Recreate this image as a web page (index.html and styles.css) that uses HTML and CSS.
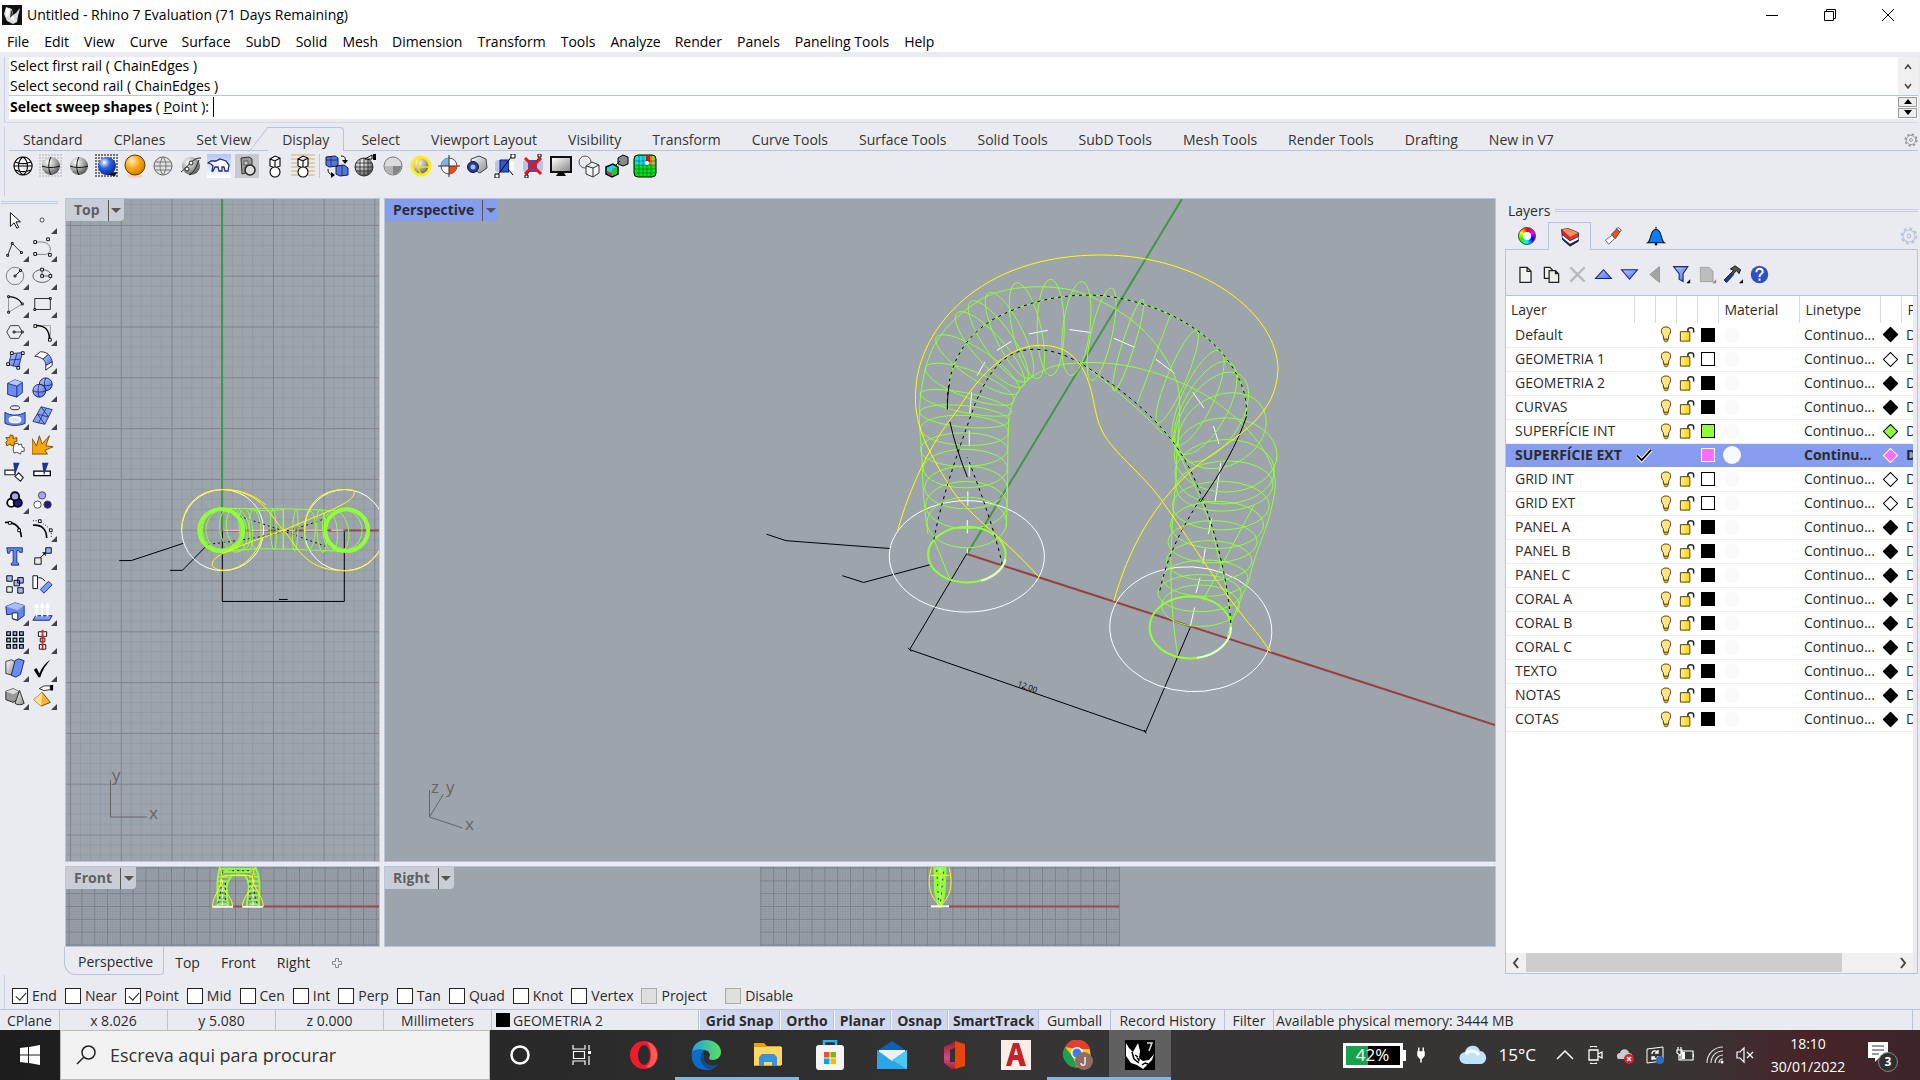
FILE: index.html
```html
<!DOCTYPE html>
<html lang="en">
<head>
<meta charset="utf-8">
<title>Untitled - Rhino 7 Evaluation (71 Days Remaining)</title>
<link rel="stylesheet" href="styles.css">
</head>
<body>
<svg class="defs" aria-hidden="true">
  <defs>
    <radialGradient id="gGrey" cx=".35" cy=".3" r=".8"><stop offset="0" stop-color="#fff"/><stop offset=".5" stop-color="#aaa"/><stop offset="1" stop-color="#444"/></radialGradient>
    <radialGradient id="gBlueBall" cx=".35" cy=".3" r=".8"><stop offset="0" stop-color="#fff"/><stop offset=".4" stop-color="#2c64e8"/><stop offset="1" stop-color="#041b80"/></radialGradient>
    <radialGradient id="gOrange" cx=".35" cy=".3" r=".8"><stop offset="0" stop-color="#ffe9b8"/><stop offset=".5" stop-color="#f9a50c"/><stop offset="1" stop-color="#c97800"/></radialGradient>
    <linearGradient id="gBlue" x2="1" y2="1"><stop offset="0" stop-color="#b9c9ff"/><stop offset="1" stop-color="#4d6fe8"/></linearGradient>
    <linearGradient id="gSky" y2="1" x2="0"><stop offset="0" stop-color="#b5c4f8"/><stop offset="1" stop-color="#fff"/></linearGradient>
    <linearGradient id="gMetal" x2="1" y2="1"><stop offset="0" stop-color="#fff"/><stop offset="1" stop-color="#8a8a8a"/></linearGradient>
    <linearGradient id="gGold" x2="1" y2="0"><stop offset="0" stop-color="#fff08a"/><stop offset="1" stop-color="#ffd60a"/></linearGradient>
    <linearGradient id="gEdge" x2="1" y2="0"><stop offset="0" stop-color="#1fa2e6"/><stop offset="1" stop-color="#5fe05a"/></linearGradient>
    <linearGradient id="gOff" y2="1" x2="0"><stop offset="0" stop-color="#a31818"/><stop offset=".6" stop-color="#d04a8a"/><stop offset="1" stop-color="#c41230"/></linearGradient>
    <pattern id="dots" width="3" height="3" patternUnits="userSpaceOnUse"><rect width="2" height="2" fill="#cfcfd2"/></pattern>
    <pattern id="dotsDark" width="3" height="3" patternUnits="userSpaceOnUse"><rect width="2" height="2" fill="#777"/></pattern>
    <pattern id="hatch" width="4" height="4" patternUnits="userSpaceOnUse"><rect width="4" height="2" fill="#dccfae"/></pattern>
    <pattern id="gridTop" x="222.2" y="529.7" width="50.7" height="50.8" patternUnits="userSpaceOnUse">
      <path d="M10.5 0V51M20.5 0V51M30.5 0V51M40.5 0V51M0 10.5H51M0 20.5H51M0 30.5H51M0 40.5H51" stroke="#929aa3" fill="none"/><path d="M.5 0V51M0 .5H51" stroke="#7f838e" fill="none"/></pattern>
    <pattern id="gridSmall" x="222.2" y="906" width="12.8" height="12.8" patternUnits="userSpaceOnUse">
      <path d="M3 0V13M5.6 0V13M8.2 0V13M10.8 0V13M0 3H13M0 5.6H13M0 8.2H13M0 10.8H13" stroke="#8c939d" stroke-width=".8" fill="none"/><path d="M.5 0V13M0 .5H13" stroke="#7a7e89" fill="none"/></pattern>
    <pattern id="gridRight" x="760.4" y="906" width="12.8" height="12.8" patternUnits="userSpaceOnUse">
      <path d="M3 0V13M5.6 0V13M8.2 0V13M10.8 0V13M0 3H13M0 5.6H13M0 8.2H13M0 10.8H13" stroke="#8c939d" stroke-width=".8" fill="none"/><path d="M.5 0V13M0 .5H13" stroke="#7a7e89" fill="none"/></pattern>
  </defs>

  <!-- display toolbar -->
  <symbol id="wire" viewBox="0 0 24 24"><path d="M12 3a9 9 0 1 0 .1 0M12 3c-6 4-6 14 0 18M12 3c6 4 6 14 0 18M4 8c5 2 11 2 16 0M4 16c5 2 11 2 16 0M3 12h18" fill="#fff" fill-opacity=".4" stroke="#000" stroke-width="1.1"/></symbol>
  <symbol id="shaded" viewBox="0 0 24 24"><path fill="url(#dots)" d="M0 0h24v24H0z"/><circle cx="12" cy="12" r="9" fill="url(#gGrey)"/><path d="M12 3c-3 5-3 13 0 18M3 12c5 2 13 2 18 0" stroke="#111" fill="none"/></symbol>
  <symbol id="shaded2" viewBox="0 0 24 24"><circle cx="12" cy="12" r="9" fill="url(#gGrey)"/><path d="M12 3c-3 5-3 13 0 18M3 12c5 2 13 2 18 0" stroke="#111" fill="none"/></symbol>
  <symbol id="rendered" viewBox="0 0 24 24"><path fill="url(#dotsDark)" d="M0 0h24v24H0z"/><path d="M8 20l12 2 2-4z" fill="#000"/><circle cx="12" cy="12" r="9" fill="url(#gBlueBall)"/></symbol>
  <symbol id="orange" viewBox="0 0 24 24"><ellipse cx="12" cy="22" rx="8" ry="2" fill="#f3cfc4"/><circle cx="12" cy="11" r="10" fill="url(#gOrange)" stroke="#5b3a00"/></symbol>
  <symbol id="ghost" viewBox="0 0 24 24"><circle cx="12" cy="12" r="9" fill="#dfe1e4" stroke="#666"/><path d="M12 3c-4 5-4 13 0 18M12 3c4 5 4 13 0 18M3 12h18M4 8h16M4 16h16" stroke="#777" fill="none"/></symbol>
  <symbol id="xray" viewBox="0 0 24 24"><circle cx="12" cy="12" r="9" fill="url(#gGrey)"/><path d="M2 18C8 14 14 3 22 4M10 21c6-3 7-8 10-15" stroke="#222" fill="none"/><circle cx="12" cy="9" r="2" fill="#fff" stroke="#222"/><circle cx="8" cy="15" r="2" fill="#fff" stroke="#222"/></symbol>
  <symbol id="arctic" viewBox="0 0 24 24"><path fill="url(#gSky)" d="M0 0h24v24H0z"/><path d="M1 9l3-2 5 0 4-2 6 2 3 4-1 6h-3l-1-4-2 0 0 4h-3l-1-4-3 0-2 4H5l1-5-2-2z" fill="#fff" stroke="#1e2a80" stroke-width="1.3"/></symbol>
  <symbol id="tech" viewBox="0 0 24 24"><path fill="#c9cacd" d="M0 0h24v24H0z"/><path d="M6 4l8-1 3 2v12l-10 3z" fill="#999" stroke="#333"/><path d="M9 7h4v4H9z" fill="#ccc" stroke="#555"/><circle cx="15" cy="16" r="5" fill="#ddd" stroke="#222" stroke-width="1.5"/></symbol>
  <symbol id="artistic" viewBox="0 0 24 24"><path d="M7 5l5-3 5 2v8l-5 2-5-2zM7 5l5 2 5-3M12 7v6" fill="#fff" stroke="#000" stroke-width="1.1"/><circle cx="12" cy="18" r="5" fill="#fff" stroke="#000" stroke-width="1.1"/></symbol>
  <symbol id="pen" viewBox="0 0 24 24"><path fill="url(#hatch)" d="M0 0h24v24H0z"/><path d="M7 5l5-3 5 2v8l-5 2-5-2zM7 5l5 2 5-3M12 7v6" fill="#fff" stroke="#000" stroke-width="1.1"/><circle cx="12" cy="18" r="5" fill="#fff" stroke="#000" stroke-width="1.1"/></symbol>
  <symbol id="toggle" viewBox="0 0 24 24"><path d="M1 3l9-1 3 2v8l-9 1-3-2zM11 12l8-1 4 3v7l-8 1-4-2z" fill="#5577d8" stroke="#101a50"/><path d="M1 6h12M6 2v10M17 11v10" stroke="#101a50" stroke-width=".7"/><path d="M16 2c4 0 5 2 4 7M3 15c0 4 2 6 6 6" stroke="#000" fill="none"/><path d="M17 6l3 4 3-4zM6 18l4 3-4 3z" fill="#000"/></symbol>
  <symbol id="mesh" viewBox="0 0 24 24"><circle cx="11" cy="13" r="9" fill="url(#gGrey)" stroke="#333"/><path d="M7 5v16M11 4v18M15 5v16M3 9h16M2 13h18M3 17h16" stroke="#222" stroke-width=".8"/><path d="M12 5l7-4v4z" fill="#fff" stroke="#000"/><path d="M20 0h3v6h-3z"/></symbol>
  <symbol id="flat" viewBox="0 0 24 24"><circle cx="12" cy="12" r="9" fill="#dcdcde" stroke="#777"/><path d="M3.500 12h8.500v8.500A9 9 0 0 1 3.500 12z" fill="#b5b5b8"/><path d="M12 12h8.500a9 9 0 0 1-8.500 8.500z" fill="#868689"/></symbol>
  <symbol id="glow" viewBox="0 0 24 24"><circle cx="12" cy="12" r="9" fill="url(#gGrey)" stroke="#ffec1a" stroke-width="3"/><path d="M12 4c-4 5-4 11 0 16M4 13h16" stroke="#f4dd20" fill="none" stroke-width="1.5"/></symbol>
  <symbol id="quad" viewBox="0 0 24 24"><circle cx="12" cy="12" r="8" fill="#f4f6fa" stroke="#555"/><path d="M12 4a8 8 0 0 0-8 8h8z" fill="#82aef0"/><path d="M12 20a8 8 0 0 0 8-8h-8z" fill="#f04a18"/><path d="M12 1v22M1 12h22" stroke="#333"/></symbol>
  <symbol id="camera" viewBox="0 0 24 24"><path d="M6 5l8-3 7 3 1 9-7 5-8-4z" fill="url(#gMetal)" stroke="#444"/><circle cx="8" cy="13" r="5.500" fill="#243f96" stroke="#0b1640"/><circle cx="8" cy="13" r="2.500" fill="#a9bdf2"/></symbol>
  <symbol id="clip" viewBox="0 0 24 24"><rect x="2" y="6" width="8" height="12" rx="3" fill="#b9c4e6"/><path d="M7 6h9v12H7z" fill="#2f57cf" stroke="#0a1a66"/><path d="M16 6l5 2v9l-5 1z" fill="#fff" opacity=".8"/><path d="M4 22L19 2M15 15l5 6" stroke="#000"/><path d="M2 20h4v4H2zM18 0h4v4h-4z" fill="#fff" stroke="#000"/></symbol>
  <symbol id="clipx" viewBox="0 0 24 24"><rect x="2" y="6" width="20" height="12" rx="3" fill="#b9c4e6"/><path d="M7 6h9v12H7z" fill="#2f57cf"/><path d="M5 22L19 2" stroke="#000"/><path d="M17 0h3v3h-3zM4 21h3v3H4z" fill="#fff" stroke="#000"/><path d="M4 4l16 16M20 4L4 20" stroke="#f01414" stroke-width="3"/></symbol>
  <symbol id="monitor" viewBox="0 0 24 24"><path d="M1 2h22v17H1z" fill="#111"/><path d="M3 4h18v13H3z" fill="url(#gMetal)"/><path d="M9 19h6l2 3H7z"/></symbol>
  <symbol id="boxes" viewBox="0 0 24 24"><circle cx="8" cy="8" r="6" fill="none" stroke="#555"/><path d="M9 12l6-4 7 3v8l-6 4-7-3zM9 12l7 2 6-3M16 14v9" fill="#f5f6f8" stroke="#333"/></symbol>
  <symbol id="rgb" viewBox="0 0 24 24"><path d="M13 4l5-3 5 2v7l-5 2-5-2z" fill="#8a8a8a" stroke="#000"/><path d="M9 13l6-6" stroke="#000"/><path d="M1 13l7-3 5 3v7l-6 3-6-3z" fill="#18d8e8" stroke="#000" stroke-width="1.500"/><path d="M2 17l5 2v3l-5-2z" fill="#e22"/><path d="M7 15l5-2v7l-5 2z" fill="#19c832"/></symbol>
  <symbol id="heat" viewBox="0 0 24 24"><rect x="1" y="1" width="22" height="22" rx="4" fill="#0be00b" stroke="#000"/><path d="M4 2h9v9H2V4z" fill="#10e0e8"/><path d="M13 2h4v6h-4z" fill="#f01010"/><path d="M17 2h4l1 9h-5z" fill="#f0a818"/><path d="M6 2v20M10 2v20M14 2v20M18 2v20M2 7h20M2 11h20M2 15h20M2 19h20" stroke="#046" stroke-width=".5"/><circle cx="14" cy="9" r="2" fill="#fff"/></symbol>

  <!-- modelling toolbar -->
  <symbol id="select" viewBox="0 0 24 24"><path d="M7 4v15l4-4 3 6 2-1-3-6h5z" fill="#fff" stroke="#000"/></symbol>
  <symbol id="point" viewBox="0 0 24 24"><circle cx="11" cy="12" r="2.2" fill="#fff" stroke="#333"/></symbol>
  <symbol id="poly" viewBox="0 0 24 24"><path d="M4 20L9 7l10 10" stroke="#222" fill="none"/><path d="M3 19h2v2H3zM8 6h2v2H8zM18 16h2v2h-2z" fill="#fff" stroke="#000"/></symbol>
  <symbol id="curve" viewBox="0 0 24 24"><path d="M3 6c20-4 20 12 12 13H3" stroke="#777" fill="none"/><path d="M2 4h3v3H2zM16 1h3v3h-3zM2 17h3v3H2zM18 18h3v3h-3z" fill="#fff" stroke="#000"/></symbol>
  <symbol id="circle" viewBox="0 0 24 24"><circle cx="12" cy="12" r="9.500" fill="none" stroke="#777"/><path d="M12 12l6-6" stroke="#000"/><path d="M11 11h2v2h-2zM17 5h2v2h-2z" fill="#fff" stroke="#000"/></symbol>
  <symbol id="ellipse" viewBox="0 0 24 24"><ellipse cx="11" cy="12" rx="10" ry="7" fill="none" stroke="#555"/><path d="M11 5v7h9" stroke="#555" fill="none"/><path d="M9.500 3.500h3v3h-3zM9.500 10.500h3v3h-3zM18.500 10.500h3v3h-3z" fill="#fff" stroke="#000"/></symbol>
  <symbol id="arc" viewBox="0 0 24 24"><path d="M5 4v17l15-9" stroke="#888" fill="none"/><path d="M5 4c7 0 12 3 15 8" stroke="#000" fill="none" stroke-width="1.4"/><path d="M4 3h2v2H4zM4 20h2v2H4zM19 11h2v2h-2z" fill="#fff" stroke="#000"/></symbol>
  <symbol id="rect" viewBox="0 0 24 24"><path d="M3 6h17v12H3z" fill="none" stroke="#222"/><path d="M2 17h2v2H2zM19 5h2v2h-2z" fill="#fff" stroke="#000"/></symbol>
  <symbol id="polygon" viewBox="0 0 24 24"><path d="M7 5h9l4 7-4 7H7l-4-7zM12 12h8" fill="none" stroke="#333"/><path d="M10 11h2v2h-2zM19 11h2v2h-2z" fill="#fff" stroke="#000"/></symbol>
  <symbol id="fillet" viewBox="0 0 24 24"><path d="M4 5h16v15" stroke="#999" fill="none"/><path d="M4 5c11 0 15 5 15 15" stroke="#000" fill="none" stroke-width="1.6"/><path d="M2 4h3v3H2zM18 19h3v3h-3z" fill="#fff" stroke="#000"/></symbol>
  <symbol id="srf" viewBox="0 0 24 24"><path d="M8 5l12-1-4 16-11-3zM14 5l-4 14M6 12l12-1" fill="url(#gBlue)" stroke="#22347c"/><path d="M7 3h3v3H7zM19 3h3v3h-3zM3 15h3v3H3zM14 19h3v3h-3z" fill="#fff" stroke="#000"/></symbol>
  <symbol id="sweep" viewBox="0 0 24 24"><path d="M3 8l6-5c4 0 7 1 9 3l-6 5c-3-2-6-3-9-3z" fill="#fff" stroke="#222"/><path d="M18 6c3 3 4 6 4 9l-7 3c0-3-1-5-3-7z" fill="url(#gBlue)" stroke="#22347c"/><path d="M22 14v4l-7 5v-5z" fill="#fff" stroke="#222"/></symbol>
  <symbol id="box" viewBox="0 0 24 24"><path d="M4 7l8-4 8 3v11l-6 5-10-3z" fill="#6b8cf6" stroke="#1a2c78"/><path d="M4 7l8-4 8 3-6 4z" fill="#b8c8ff"/><path d="M4 7l10 3 6-4M14 10v12" stroke="#1a2c78" fill="none"/></symbol>
  <symbol id="balls" viewBox="0 0 24 24"><circle cx="15" cy="8" r="7" fill="url(#gBlue)" stroke="#12205c"/><circle cx="8" cy="15" r="7" fill="url(#gBlue)" stroke="#12205c"/><path d="M8 8c-2 4-2 10 0 14M1 15c4 2 10 2 14 0M15 1c-2 4-2 9 0 14M9 8c4 2 9 2 13 0" fill="none" stroke="#12205c" stroke-width=".8"/></symbol>
  <symbol id="disc" viewBox="0 0 24 24"><ellipse cx="12" cy="3" rx="5" ry="2.200" fill="none" stroke="#222"/><path d="M1 8c6 4 16 4 22 0v12c-6 3-16 3-22 0z" fill="#6286ee" stroke="#1b2c74"/><ellipse cx="12" cy="16" rx="6" ry="3" fill="#d8e0fb" stroke="#fff" stroke-width="2"/></symbol>
  <symbol id="mesh2" viewBox="0 0 24 24"><path d="M10 2l12 3-8 16L1 18zM6 10l12 3M15 4L7 20M10 2l8 11M6 10l8 11" fill="#88a2ee" stroke="#22347c"/></symbol>
  <symbol id="puzzle" viewBox="0 0 24 24"><path d="M2 5l4 0 1-3 3 1 0 3 4-1 0 4-3 1 1 3-4 1-1-2-4 2-1-4 2-2z" fill="#f9a50c" stroke="#6b4200"/><path d="M11 12l4-1 1 2 3-1 1 4 2 0 0 4-3 0-1 3-4-2-3 1-1-4z" fill="#fff" stroke="#444"/></symbol>
  <symbol id="explode" viewBox="0 0 24 24"><path d="M0 23V6l5 8L8 3l3 9 8-9-4 11 8 1-9 4 3 4z" fill="#f9a50c" stroke="#7a4b00"/></symbol>
  <symbol id="trim" viewBox="0 0 24 24"><path d="M1 10h11v5H1zM12 17l4-4 5 5-3 4z" fill="#fff" stroke="#222" stroke-width="1.3"/><path d="M10 2h7l-5 13z" fill="#1c3690"/></symbol>
  <symbol id="split" viewBox="0 0 24 24"><path d="M2 11h18v5H2z" fill="#fff" stroke="#000" stroke-width="1.400"/><path d="M11 2h7l-5 14z" fill="#1c3690"/></symbol>
  <symbol id="group" viewBox="0 0 24 24"><g stroke="#000" stroke-width="2"><circle cx="8" cy="15" r="4.500" fill="#fff"/><circle cx="15" cy="15" r="4.500" fill="#201a88"/><circle cx="12" cy="8" r="4.500" fill="#a6a6f4"/></g></symbol>
  <symbol id="ungroup" viewBox="0 0 24 24"><g stroke="#444"><circle cx="6" cy="17" r="4" fill="#fff"/><circle cx="17" cy="17" r="4" fill="#201a88"/><circle cx="11" cy="7" r="4" fill="#a6a6f4"/></g></symbol>
  <symbol id="join" viewBox="0 0 24 24"><path d="M1 6c12-1 17 5 18 16" stroke="#000" stroke-width="1.800" fill="none"/><path d="M5 5h3v3H5zM15 13h3v3h-3z" fill="#fff" stroke="#000"/></symbol>
  <symbol id="edit" viewBox="0 0 24 24"><path d="M1 9c10-1 15 5 15 14" stroke="#000" stroke-width="1.800" fill="none"/><path d="M1 4h7l13 10v9" stroke="#000" stroke-dasharray="1 2" fill="none"/><path d="M7 3h3v3H7zM19 13h3v3h-3z" fill="#fff" stroke="#000"/></symbol>
  <symbol id="text" viewBox="0 0 24 24"><path d="M3 3h17v5h-3l-1-2h-2v13l2 1v2H8v-2l2-1V6H7L6 9H4z" fill="#6286ee" stroke="#1c2f80"/></symbol>
  <symbol id="move" viewBox="0 0 24 24"><path d="M3 14h7v7H3z" fill="#eee" stroke="#000"/><path d="M15 3h6v6h-6z" fill="#9db2fa" stroke="#000"/><path d="M9 14l5-5" stroke="#000"/><path d="M11 8h4v4z"/></symbol>
  <symbol id="copy" viewBox="0 0 24 24"><g fill="#a3b6fb" stroke="#000"><path d="M3 3h6v6H3zM15 5h6v6h-6zM11 8h6v6h-6zM15 16h6v6h-6z"/><path d="M3 15h6v6H3z" fill="#eee"/></g></symbol>
  <symbol id="rotate" viewBox="0 0 24 24"><path d="M1 3h5v14H1z" fill="#fff" stroke="#000"/><path d="M9 18L18 9l4 4-9 9z" fill="#7d9af5" stroke="#1a2c78"/><path d="M7 5c4 0 6 2 7 4" stroke="#000" fill="none"/></symbol>
  <symbol id="bool" viewBox="0 0 24 24"><path d="M2 6l10-4 10 3v11l-7 5-5-1v-6l-7 1z" fill="#6488f0" stroke="#14256c"/><path d="M2 6l10-4 10 3-7 5z" fill="#aabefb"/><path d="M9 13h6v8l-6-2z" fill="#fff" stroke="#222"/></symbol>
  <symbol id="dir" viewBox="0 0 24 24"><path d="M4 16h18l-3 5H1z" fill="#7f9af0" stroke="#102074"/><path d="M5 17V5M11 17V5M17 17V5" stroke="#fff" stroke-width="2"/><path d="M2 7l3-5 3 5zM8 7l3-5 3 5zM14 7l3-5 3 5z" fill="#fff"/></symbol>
  <symbol id="array" viewBox="0 0 24 24"><path d="M3 3h4v4H3zM10 3h4v4h-4zM17 3h4v4h-4zM3 10h4v4H3zM10 10h4v4h-4zM17 10h4v4h-4zM3 17h4v4H3zM10 17h4v4h-4zM17 17h4v4h-4z" fill="#a3b6fb" stroke="#000" stroke-width="1.300"/></symbol>
  <symbol id="align" viewBox="0 0 24 24"><path d="M7 3h9v5H7zM9 10h5v4H9zM8 17h7v5H8z" fill="#fff" stroke="#000"/><path d="M11.500 1v22" stroke="#d22" stroke-width="2"/></symbol>
  <symbol id="deform" viewBox="0 0 24 24"><path d="M2 5l6-2 4 2-2 15-8-2z" fill="url(#gMetal)" stroke="#333"/><path d="M12 4l4-2 6 2-4 15-5 3-5-2z" fill="#6c8df0" stroke="#14256c"/></symbol>
  <symbol id="check" viewBox="0 0 24 24"><path d="M2 14l3-2 3 6C11 11 15 6 20 3 15 9 11 15 9 22H7z"/></symbol>
  <symbol id="solids" viewBox="0 0 24 24"><path d="M2 7l8-3 6 3v8l-6 4-8-3z" fill="#999" stroke="#222"/><path d="M2 7l8-3 6 3-6 3z" fill="#ddd"/><path d="M17 6l5 14c-2 2-8 2-10 0z" fill="url(#gMetal)" stroke="#222"/></symbol>
  <symbol id="pyramid" viewBox="0 0 24 24"><path d="M11 8l9 11-10 4-8-7z" fill="#f6b53c" stroke="#6b4200"/><path d="M11 8l-1 15-8-7z" fill="#ffe08a"/><path d="M8 4l5-3 7 0v4l-7 1z" fill="#fff" stroke="#222"/><path d="M20 0h3v6h-3z"/></symbol>

  <!-- layers panel -->
  <symbol id="layers" viewBox="0 0 24 24"><path d="M2 3l8-1 12 5v10l-10 6-9-8z" fill="#14307c" stroke="#000"/><path d="M3 10l9 7 10-5v3l-10 5-9-7z" fill="#fff"/><path d="M2 4l10 8v4L3 9z" fill="#d9281a"/><path d="M12 12l10-5v4l-10 5z" fill="#e8381c"/><path d="M2 3l8-1 12 5-10 5z" fill="#ff8a5c"/></symbol>
  <symbol id="tube" viewBox="0 0 24 24"><path d="M3 17l8-6 3 4-7 7z" fill="#fff" stroke="#555"/><path d="M10 10l7-7 4 3-6 9z" fill="#e8501c" stroke="#444"/><path d="M16 3l3-1 3 3-2 2z" fill="#eee" stroke="#444"/></symbol>
  <symbol id="bell" viewBox="0 0 24 24"><path d="M12 1v3M2 20c5-3 2-15 10-16 8 1 5 13 10 16z" fill="#0a7cff" stroke="#111" stroke-width="1.300"/><circle cx="12" cy="22" r="1.500"/></symbol>
  <symbol id="gear" viewBox="0 0 24 24"><circle cx="12" cy="12" r="8" fill="none" stroke="currentColor" stroke-width="1.500"/><circle cx="12" cy="12" r="10" fill="none" stroke="currentColor" stroke-width="2.500" stroke-dasharray="4 3.850"/><circle cx="12" cy="12" r="2.500" fill="none" stroke="currentColor" stroke-width="1.500"/></symbol>
  <symbol id="doc" viewBox="0 0 24 24"><path d="M5 3h9l5 5v14H5zM14 3v5h5" fill="#f4f4f4" stroke="#222" stroke-width="1.600"/></symbol>
  <symbol id="docs" viewBox="0 0 24 24"><path d="M3 3h7l3 3v11H3z" fill="#eee" stroke="#222" stroke-width="1.600"/><path d="M9 7h8l4 4v11H9zM17 7v4h4" fill="#eee" stroke="#222" stroke-width="1.600"/></symbol>
  <symbol id="del" viewBox="0 0 24 24"><path d="M3 3l18 18M21 3L3 21" stroke="#b9b9bb" stroke-width="3"/></symbol>
  <symbol id="up" viewBox="0 0 24 24"><path d="M2 17L12 6l10 11z" fill="url(#gBlue)" stroke="#1a2480" stroke-width="1.400"/></symbol>
  <symbol id="down" viewBox="0 0 24 24"><path d="M2 6h20L12 18z" fill="url(#gBlue)" stroke="#1a2480" stroke-width="1.400"/></symbol>
  <symbol id="left" viewBox="0 0 24 24"><path d="M17 2v20L5 12z" fill="#a5a5a5" stroke="#888"/></symbol>
  <symbol id="filter" viewBox="0 0 24 24"><path d="M2 2h18l-6 9v10l-5-3v-7z" fill="url(#gBlue)" stroke="#1c2a66" stroke-width="1.400"/><path d="M23 18v5h-5z"/></symbol>
  <symbol id="sheet" viewBox="0 0 24 24"><path d="M3 3h11l5 5v13H3z" fill="#bdbdbf" stroke="#999"/><path d="M23 18v5h-5z" fill="#888"/></symbol>
  <symbol id="hammer" viewBox="0 0 24 24"><path d="M8 5l6-4 7 5-2 5-3-4-3 3-10 12-3-3L12 7z" fill="#555" stroke="#000"/><path d="M10 10l3 2L4 22l-4-3z" fill="#1f3a90"/><path d="M24 18v5h-5z"/></symbol>
  <symbol id="help" viewBox="0 0 24 24"><circle cx="12" cy="12" r="11" fill="#2f50c0"/><path d="M8 9c0-6 9-5 8 0-1 3-4 2-4 6M12 17v3" fill="none" stroke="#fff" stroke-width="2.500"/></symbol>
  <symbol id="bulb" viewBox="0 0 12 18"><path d="M6 1c7 0 5 7 3 9l-.5 4h-5L3 10C1 8-1 1 6 1z" fill="#ffe680" stroke="#4a3a10"/><path d="M4 14h4v2l-2 1-2-1z" fill="#e0b020" stroke="#4a3a10" stroke-width=".7"/></symbol>
  <symbol id="lock" viewBox="0 0 16 18"><path d="M9 7V4c0-3 6-3 6 0v3" fill="none" stroke="#222" stroke-width="1.600"/><path d="M1 6h10v10H1z" fill="url(#gGold)" stroke="#4a3a10"/></symbol>
  <symbol id="tick" viewBox="0 0 18 16"><path d="M1 8l5 5L16 2" fill="none" stroke="#fff" stroke-width="4"/><path d="M1 8l5 5L16 2" fill="none" stroke="#000" stroke-width="2"/></symbol>
</svg>

<header class="titlebar">
  <svg class="app-logo" viewBox="0 0 20 20"><path d="M0 0h20v20H0z" fill="#111"/><path d="M4 2l6 2 1 6 3-2 4-5-2 8-1 6-4 2-6-3-3-7z" fill="#ddd"/><path d="M4 3l4 1-1 6-3 2zM9 10l3 2 1 5-4-3z" fill="#fff"/><path d="M9 4l2 6-3 3z" fill="#333"/></svg>
  <span class="title">Untitled - Rhino 7 Evaluation (71 Days Remaining)</span>
  <div class="win-buttons">
    <button aria-label="Minimize"><svg viewBox="0 0 14 14"><path d="M1 7.500h12" stroke="#000"/></svg></button>
    <button aria-label="Restore"><svg viewBox="0 0 14 14"><path d="M1.500 3.500h9v9h-9zM3.500 3v-1.500h9v9H11" fill="none" stroke="#000"/></svg></button>
    <button aria-label="Close"><svg viewBox="0 0 14 14"><path d="M1 1l12 12M13 1L1 13" stroke="#000"/></svg></button>
  </div>
</header>
<nav class="menubar" id="menubar"></nav>

<section class="command">
  <div class="history"><div class="history-text"><p>Select first rail ( ChainEdges )</p><p>Select second rail ( ChainEdges )</p></div>
    <div class="history-scroll"><svg viewBox="0 0 8 6"><path d="M1 5l3-4 3 4" fill="none" stroke="#444" stroke-width="1.500"/></svg><svg viewBox="0 0 8 6"><path d="M1 1l3 4 3-4" fill="none" stroke="#444" stroke-width="1.500"/></svg></div></div>
  <div class="prompt"><label for="cmd"><b>Select sweep shapes</b> ( <u>P</u>oint ):</label><input id="cmd" type="text">
    <div class="spin"><button aria-label="Previous"><svg viewBox="0 0 8 5"><path d="M0 5l4-5 4 5z"/></svg></button><button aria-label="Next"><svg viewBox="0 0 8 5"><path d="M0 0h8L4 5z"/></svg></button></div></div>
</section>

<section class="ribbon">
  <div class="ribbon-tabs" id="tabs"></div>
  <div class="ribbon-icons" id="displayTools"></div>
</section>

<main class="workspace">
  <aside class="toolbox"><div class="grip"></div><div class="tool-grid" id="modelTools"></div></aside>

  <section class="views">
    <div class="view-grid">
      <div class="view">
        <svg class="scene" viewBox="66 199 313 662" preserveAspectRatio="xMidYMid slice">
          <path fill="url(#gridTop)" d="M66 199h313v662H66z"/>
          <path d="M222 199v331" stroke="#3f9a45" stroke-width="2"/><path d="M222 530.500h157" stroke="#964a4c" stroke-width="2"/>
          <g class="thin" transform="translate(0 190) scale(.3333 .3381)">
            <path d="M667 1010V1217H1033V1010M837 1211h26M358 1096h36L550 1045M510 1125h37l70-70" stroke="#000"/>
            <g stroke="#fff"><ellipse cx="668" cy="1006" rx="123" ry="120"/><ellipse cx="1034" cy="1006" rx="121" ry="120"/><path d="M670 1006h360" stroke-dasharray="18 9"/></g>
            <path d="M690 955l150 50 140 50M610 1050c80-10 230-25 370-80" stroke="#111" stroke-dasharray="2 3"/>
            <g stroke="#90ff38"><path d="M680 942c120 0 220 0 350 8M680 1068c120-14 230-2 350 0M740 942c50 12 80 4 110 4"/><g id="topRings"></g>
              <ellipse cx="664" cy="1006" rx="66" ry="62" stroke-width="4"/><ellipse cx="1040" cy="1006" rx="64" ry="62" stroke-width="4"/></g>
            <g stroke="#ff0"><path d="M545 1006c0-70 50-120 122-120 120 0 150 90 184 120 40 45 60 120 182 120 60 0 90-30 120-80"/><path d="M1060 888c20 30-70 60-209 118C700 1060 630 1080 637 1112c20 25 110 20 148-80"/><path d="M667 886c50-4 100 20 130 45M1060 888c-90-14-150 40-145 125"/></g>
          </g>
          <path d="M110.500 780v37H147" stroke="#666" fill="none"/>
          <text class="axis" x="112" y="781">y</text><text class="axis" x="149" y="819">x</text>
        </svg>
        <button class="view-title">Top<i></i></button>
      </div>
      <div class="view">
        <svg class="scene" viewBox="385 199 1110 662" preserveAspectRatio="xMidYMid slice">
          <path d="M967 554L1182 199" stroke="#449548" stroke-width="2"/><path d="M967 554L1495 725" stroke="#964040" stroke-width="2"/>
          <g class="thin" transform="translate(740 195) scale(.4847 .3571)">
            <path d="M468 1004L350 1273 837 1503 929 1211M347 1268l6 10M834 1498l4 10M55 950l40 18 215 22M211 1066l44 19 138-50" stroke="#000"/>
            <g stroke="#fff"><ellipse cx="468" cy="1012" rx="160" ry="156"/><ellipse cx="930" cy="1216" rx="166" ry="176" transform="rotate(-20 930 1216)"/>
              <path d="M469 1004v-14M469 948v-38M470 870v-40M473 788v-42M473 704v-44M474 612l4-60M489 506l16-38M530 435l30-25M596 389l39-10M680 377l44 8M771 401l44 26M858 460l38 39M934 552l23 44M977 647l11 50M992 750l-12 110M973 906l-7 44M960 990l-5 42M949 1072l-8 42M938 1155l-9 53"/></g>
            <g stroke="#90ff38" id="perspRings"></g>
            <g stroke="#90ff38">
              <path d="M388 950C375 850 378 760 373 690 365 600 375 520 385 475 400 400 440 340 500 290 560 245 680 245 740 295 830 350 880 440 903 530 915 600 898 700 900 790 890 930 880 1100 903 1288"/>
              <path d="M549 930C555 800 550 720 555 620 565 540 600 500 650 478 760 450 870 490 960 560 1040 630 1100 720 1105 810 1095 930 1065 980 1050 1080 1010 1200 1000 1250 1010 1240M400 965l33 110M1060 870L955 1135"/>
              <path d="M428 600C425 500 450 410 520 350 600 290 680 275 750 282 860 300 960 370 1010 470 1035 520 1046 560 1045 620M703 470c60 60 130 140 170 200M888 335L820 583"/>
              <path d="M860 640c20 25 25 35 35 60 40 100 70 180 90 300 15 80 26 140 28 210"/>
              <ellipse cx="468" cy="1007" rx="80" ry="78" stroke-width="2"/><ellipse cx="929" cy="1211" rx="84" ry="87" stroke-width="2"/></g>
            <g stroke="#000" stroke-dasharray="3 4"><path d="M400 965c15-110 45-230 85-380 30-95 60-150 120-153 70 0 120 60 160 95 60 60 130 140 170 260 30 90 70 250 78 420"/><path d="M541 1035c-15-100-60-260-72-300M428 600C425 500 450 410 520 350 600 290 680 275 750 282 860 300 960 370 1010 470 1035 520 1046 560 1045 620M950 850c-50 110-70 170-85 265"/></g>
            <path d="M433 635c8 50 20 100 36 155M428 600c0-20 0-40 4-70M1045 620c-20 80-50 150-95 240" stroke="#000"/>
            <path d="M1013 1210a84 87 0 0 1-70 86M548 1020a80 78 0 0 1-50 60" stroke="#e6ffd0" stroke-width="2"/>
            <path stroke="#ff0" d="M324 945C350 820 390 700 450 600 500 490 560 420 620 421 680 420 710 470 725 550 735 610 735 630 750 668 770 720 830 780 870 855 940 990 990 1100 1050 1200 1070 1230 1085 1260 1095 1280M617 1070C530 940 470 900 430 810 390 720 355 640 363 540 370 380 490 165 750 168 950 170 1110 330 1110 490 1105 620 1030 670 950 750 850 860 800 1000 771 1138"/>
          </g>
          <text class="dim" x="1017" y="686" transform="rotate(20 1017 686)">12.00</text>
          <path d="M429.500 790v27l33 11M429.500 817l14-23" stroke="#666" fill="none"/>
          <text class="axis" x="431" y="793">z</text><text class="axis" x="446" y="793">y</text><text class="axis" x="465" y="830">x</text>
        </svg>
        <button class="view-title current">Perspective<i></i></button>
      </div>
      <div class="view">
        <svg class="scene" viewBox="66 867 313 79" preserveAspectRatio="xMidYMid slice">
          <path fill="url(#gridSmall)" d="M66 867h313v79H66z"/><path d="M222 906.500h157" stroke="#964a4c" stroke-width="2"/>
          <g class="thin" transform="translate(0 720) scale(.4464 .3333)">
            <g stroke="#90ff38" stroke-width="2"><path d="M487 558c4-30-6-70 6-116M511 558c-3-40-10-60 8-92h30c16 30 4 60 4 92M580 558c0-40 6-80-8-116M496 446h74M500 456h66M490 470h22M487 484h24M488 498h22M489 512h22M488 526h22M488 540h22M488 553h22M557 470h22M556 484h24M556 498h22M558 512h20M556 526h22M557 540h22M557 553h22M494 462l20-16 20 12 20-12 18 18"/></g>
            <path d="M488 550c10-30 6-70 12-100M576 550c-10-30-6-70-12-100M505 540v-60M560 540v-60M520 452h40" stroke="#173a08" stroke-dasharray="2 3"/>
            <path d="M498 556v-80M567 556v-80" stroke="#fff" stroke-dasharray="4 3"/>
            <path d="M476 560c0-40 34-70 16-118M521 560c0-40-46-70-18-94h56c30 20-16 54-16 94M590 560c0-40-40-70-18-118" stroke="#ff0"/>
            <path d="M476 560h46M543 560h46" stroke="#fff" stroke-width="2"/>
          </g>
        </svg>
        <button class="view-title">Front<i></i></button>
      </div>
      <div class="view">
        <svg class="scene" viewBox="385 867 1110 79" preserveAspectRatio="xMidYMid slice">
          <path fill="url(#gridRight)" d="M760 867h360v79H760z"/><path d="M940 906.500h179" stroke="#964a4c" stroke-width="2"/>
          <g class="thin" transform="translate(640 840) scale(.4082 .3333)">
            <path d="M720 80h30l-3 80-8 42h-8l-9-42z" fill="#90ff38" stroke="#90ff38"/><path d="M735 85v105" stroke="#fff" stroke-dasharray="5 3"/><path d="M727 90l4 90M744 95l-8 90" stroke="#174a08" stroke-dasharray="2 5"/>
            <path d="M714 82c-14 60 0 90 21 116 24-26 34-60 22-116M712 106h46" stroke="#ff0"/><path d="M713 199h44" stroke="#fff" stroke-width="2"/>
          </g>
        </svg>
        <button class="view-title">Right<i></i></button>
      </div>
    </div>
    <nav class="view-tabs"><a class="on" href="#">Perspective</a><a href="#">Top</a><a href="#">Front</a><a href="#">Right</a>
      <a href="#" aria-label="Add"><svg viewBox="0 0 12 12"><path d="M4.500 1.500h3v3h3v3h-3v3h-3v-3h-3v-3h3z" fill="none" stroke="#888"/></svg></a></nav>
  </section>

  <aside class="panel">
    <div class="panel-head"><span>Layers</span><div class="grip"></div></div>
    <div class="panel-tabs">
      <button aria-label="Properties"><span class="wheel"></span></button>
      <button class="on" aria-label="Layers"><svg><use href="#layers"/></svg></button>
      <button aria-label="Rendering"><svg><use href="#tube"/></svg></button>
      <button aria-label="Notifications"><svg><use href="#bell"/></svg></button>
      <button class="panel-gear" aria-label="Options"><svg><use href="#gear"/></svg></button>
    </div>
    <div class="panel-body">
      <div class="layer-tools" id="layerTools"></div>
      <div class="layer-list">
        <table>
          <colgroup><col class="w-name"><col class="w-ic"><col class="w-ic"><col class="w-ic"><col class="w-ic"><col class="w-txt"><col class="w-txt"><col class="w-ic"><col></colgroup>
          <thead><tr><th>Layer</th><th></th><th></th><th></th><th></th><th>Material</th><th>Linetype</th><th></th><th>P</th></tr></thead>
          <tbody id="layerRows"></tbody>
        </table>
      </div>
      <div class="hscroll"><button aria-label="Scroll left"><svg viewBox="0 0 8 12"><path d="M6 1L2 6l4 5" fill="none" stroke="#444" stroke-width="2"/></svg></button><div class="track"><div class="thumb"></div></div><button aria-label="Scroll right"><svg viewBox="0 0 8 12"><path d="M2 1l4 5-4 5" fill="none" stroke="#444" stroke-width="2"/></svg></button></div>
    </div>
  </aside>
</main>

<section class="osnap" id="osnap"></section>

<footer class="status">
  <span class="c-plane">CPlane</span><span class="c-num">x 8.026</span><span class="c-num">y 5.080</span><span class="c-num">z 0.000</span><span class="c-num">Millimeters</span>
  <span class="c-layer"><i></i>GEOMETRIA 2</span>
  <button class="on s1">Grid Snap</button><button class="on s2">Ortho</button><button class="on s3">Planar</button><button class="on s3">Osnap</button><button class="on s4">SmartTrack</button><button class="s5">Gumball</button><button class="s6">Record History</button><button class="s7">Filter</button>
  <span class="c-mem">Available physical memory: 3444 MB</span>
</footer>

<div class="taskbar">
  <button class="start" aria-label="Start"><svg viewBox="0 0 20 20"><path d="M0 3l8-1v7.500H0zM9 2l11-2v9.500H9zM0 10.500h8V18l-8-1zM9 10.500h11V20L9 18z" fill="#fff"/></svg></button>
  <label class="search"><svg viewBox="0 0 20 20"><circle cx="12.500" cy="7.500" r="6.500" fill="none" stroke="#222" stroke-width="1.500"/><path d="M8 12l-7 7" stroke="#222" stroke-width="1.500"/></svg><input type="text" placeholder="Escreva aqui para procurar" aria-label="Search"></label>
  <div class="apps">
    <button aria-label="Cortana"><svg viewBox="0 0 30 30"><circle cx="15" cy="15" r="8.500" fill="none" stroke="#fff" stroke-width="2.500"/></svg></button>
    <button aria-label="Task view"><svg viewBox="0 0 30 30"><path d="M6 5v4h12V5M6 25v-4h12v4M6.500 11.500h11v7h-11zM22 5v5M22 16v9" fill="none" stroke="#fff" stroke-width="1.200"/><path d="M21 11h3v3h-3z" fill="#fff"/></svg></button>
    <button aria-label="Opera"><svg viewBox="0 0 30 30"><ellipse cx="15" cy="15" rx="14" ry="14" fill="#f01a2e"/><path d="M18 2c11 2 14 18 4 25-3 1-5 0-5 0 7-5 6-19 1-25z" fill="#ff5a5a"/><ellipse cx="15" cy="15" rx="6" ry="10" fill="#2c2c2c"/></svg></button>
    <button class="run" aria-label="Edge"><svg viewBox="0 0 30 30"><path d="M1 12C2 4 8 0 15 0c9 0 15 6 15 12 0 5-4 8-8 8-3 0-4-1-4-2 2-3 1-8-6-8C7 9 3 12 1 12z" fill="url(#gEdge)"/><path d="M1 12c3-3 9-4 12-1-4 2-5 12 4 15 4 1 8 0 10-2-2 4-7 6-12 6C6 30-1 23 1 12z" fill="#0d6cc4"/><path d="M13 11c-7 6-2 17 5 18 4 0 8-3 9-5-6 3-14 0-14-6z" fill="#114a8b"/></svg></button>
    <button class="run" aria-label="Explorer"><svg viewBox="0 0 30 30"><path d="M1 3h10l3 3h14v20H1z" fill="#e6a20a"/><path d="M1 7h28v18H1z" fill="#ffd766"/><path d="M6 26V17l3-3h12l3 3v9h-5v-4h-8v4z" fill="#3a92dc"/></svg></button>
    <button aria-label="Store"><svg viewBox="0 0 30 30"><path d="M9 6V1h12v5" fill="none" stroke="#29b6f6" stroke-width="2.500"/><rect x="1" y="5" width="28" height="25" rx="3" fill="#f5f5f5"/><path d="M9 12h5.500v5.500H9z" fill="#f25022"/><path d="M15.500 12H21v5.500h-5.500z" fill="#7fba00"/><path d="M9 18.500h5.500V24H9z" fill="#00a4ef"/><path d="M15.500 18.500H21V24h-5.500z" fill="#ffb900"/></svg></button>
    <button aria-label="Mail"><svg viewBox="0 0 30 30"><path d="M0 11L15 1l15 10v4H0z" fill="#0b62b0"/><path d="M2 10h26v12H2z" fill="#f0f0f0"/><path d="M0 10l15 11 15-11v19H0z" fill="#2aa6e8"/><path d="M15 20l15-10v19z" fill="#4cc8f4"/></svg></button>
    <button aria-label="Office"><svg viewBox="0 0 30 30"><path d="M5 7L17 1v6l-6 3v12H17v6l-4 1-8-6z" fill="url(#gOff)"/><path d="M16 1l10 3v22l-10 3z" fill="#e8450c"/></svg></button>
    <button aria-label="AutoCAD"><svg viewBox="0 0 30 30"><path d="M0 0h30v30H0z" fill="#faeee8"/><path d="M5 26L12 3h6l7 23h-6l-2-6h-5l-2 6zM13 15h4l-2-7z" fill="#c5222c"/></svg></button>
    <button class="run" aria-label="Chrome"><svg viewBox="0 0 30 30"><circle cx="14" cy="14" r="13.500" fill="#f9c32c"/><path d="M2 7a13.500 13.500 0 0 1 25 2H14z" fill="#e0402f"/><path d="M2 7l8 10 4 10.500A13.500 13.500 0 0 1 2 7z" fill="#1f9d55"/><circle cx="14" cy="13" r="6" fill="#fff"/><circle cx="14" cy="13" r="4.500" fill="#3b7ded"/><circle cx="21" cy="21" r="9" fill="#8d6e63"/><path d="M22 17v6c0 3-4 3-4 0" fill="none" stroke="#eee" stroke-width="1.500"/></svg></button>
    <button class="run active" aria-label="Rhino"><svg viewBox="0 0 30 30"><path d="M0 0h30v30H0z"/><path d="M1 3l3 5 4 4 5-9 2 8-1 7 4 3 6-1 5-6-2 6-4 4-5 5-6-4-6-2-5-7z" fill="#fff"/><path d="M7 12l2 7 5 4M10 15l3 2M17 25l3-2 3 1" stroke="#000" stroke-width="1.500" fill="none"/><path d="M11 17l4 2-1 3z"/><path d="M22 3h5l-3 8" stroke="#ddd" stroke-width="1.500" fill="none"/></svg></button>
  </div>
  <div class="tray">
    <span class="battery">42%</span>
    <svg class="t16" viewBox="0 0 16 22"><path d="M5 1v6M11 1v6M8 14v7" stroke="#fff" stroke-width="2"/><path d="M3 6h10v6l-3 4H6l-3-4z" fill="#fff"/></svg>
    <svg class="t28" viewBox="0 0 28 24"><path d="M7 21a6 6 0 0 1-1-12C8 1 19 1 21 8c8 1 8 12 1 13z" fill="#bfe3fa"/><path d="M7 11c3-4 10-4 13 1" stroke="#fff" stroke-width="3" fill="none"/></svg>
    <span class="temp">15°C</span>
    <svg class="t18" viewBox="0 0 18 18"><path d="M1 13l8-8 8 8" stroke="#fff" stroke-width="1.500" fill="none"/></svg>
    <svg class="t18" viewBox="0 0 18 18"><path d="M3 4h9v10H3zM12 8l4-2v6l-4-2M4 1c2-1 5-1 7 0M4 17c2 1 5 1 7 0" stroke="#fff" fill="none" stroke-width="1.300"/></svg>
    <svg class="t18" viewBox="0 0 18 18"><path d="M2 13C-1 8 3 7 4 7c1-5 8-5 9 0 4 0 5 6 1 6z" fill="#ccc"/><circle cx="13" cy="13" r="5" fill="#d9202e"/><path d="M11 11l4 4M15 11l-4 4" stroke="#fff" stroke-width="1.500"/></svg>
    <svg class="t18" viewBox="0 0 18 18"><path d="M1 3l16-2v14L1 17z" fill="none" stroke="#fff"/><path d="M6 8c0-4 5-4 6-1M12 4v3H9M12 10c0 3-5 4-6 1M6 14v-3h3" stroke="#fff" fill="none" stroke-width="1.300"/><circle cx="14" cy="14" r="4" fill="#2a6fc0"/></svg>
    <svg class="t18" viewBox="0 0 18 18"><path d="M5 5h12v9H5zM17.500 8v3M1 4h5v3l-2 2-3-2zM2 1v3M5 1v3M3 9v5h2" fill="none" stroke="#fff" stroke-width="1.200"/><path d="M6 6h3v7H6z" fill="#fff"/></svg>
    <svg class="t18" viewBox="0 0 18 18"><path d="M1 17C1 8 8 1 17 1M5 17C5 10 10 5 17 5M9 17c0-4 3-8 8-8M13 17c0-2 1-4 4-4" stroke="#ddd" fill="none" stroke-width="1.200"/><circle cx="16" cy="16" r="1.500" fill="#fff"/></svg>
    <svg class="t18" viewBox="0 0 18 18"><path d="M1 6h3l4-4v14l-4-4H1zM11 6l6 6M17 6l-6 6" stroke="#fff" fill="none" stroke-width="1.200"/></svg>
    <div class="clock"><span>18:10</span><span>30/01/2022</span></div>
    <button class="notes" aria-label="Notifications"><svg viewBox="0 0 20 20"><path d="M0 0h20v16h-9l-4 4v-4H0z" fill="#fff"/><path d="M4 4h12M4 8h12M4 12h7" stroke="#333"/></svg><b>3</b></button>
  </div>
</div>
<script src="script.js"></script>
</body>
</html>
```
FILE: styles.css
```css
* { box-sizing: border-box; margin: 0; padding: 0; }
body { min-height: 100vh; display: flex; flex-direction: column; background: #eaebf0; color: #2b2b2b; font: 14px/20px "Open Sans", "Noto Sans", sans-serif; overflow-x: hidden; }
button, input { font: inherit; color: inherit; border: 0; background: none; }
button { display: flex; align-items: center; justify-content: center; }
a { color: inherit; text-decoration: none; }
svg { display: block; }
.defs { position: absolute; width: 0; height: 0; }

.titlebar { display: flex; align-items: center; height: 29px; padding-left: 2px; background: #fff; color: #000; }
.app-logo { width: 20px; height: 20px; }
.title { flex: 1; padding-left: 5px; }
.win-buttons { display: flex; margin-right: 3px; }
.win-buttons button { width: 58px; height: 28px; }
.win-buttons svg { width: 14px; height: 14px; }
.menubar { display: flex; gap: 14px; height: 23px; padding: 2px 0 0 7px; align-items: center; background: #fff; color: #000; white-space: nowrap; }
.menubar a { padding-right: 1px; }
.menubar a:nth-child(4n) { padding-right: 0; }

.command { margin: 5px 2px 0 4px; padding-bottom: 3px; border-left: 1px solid #c8d0e4; border-bottom: 1px solid #d3d9e8; padding-left: 4px; color: #000; }
.history { display: flex; background: #fff; border-bottom: 1px solid #bac4dc; height: 39px; }
.history-text { flex: 1; padding-left: 1px; line-height: 20px; margin-top: -1px; }
.history-scroll { width: 20px; background: #f0f0f0; display: flex; flex-direction: column; justify-content: space-around; align-items: center; }
.history-scroll svg { width: 8px; height: 6px; }
.prompt { display: flex; align-items: center; height: 23px; padding: 0 0 2px 1px; background: #fff; }
.prompt input { flex: 1; margin-left: 4px; height: 20px; border-left: 1px solid #000; }
.spin { width: 20px; }
.spin button { width: 19px; height: 10px; margin-top: 1px; border: 1px solid #999; background: #eee; }
.spin svg { width: 8px; height: 5px; }

.ribbon { margin: 4px 2px 0 4px; height: 69px; border-left: 1px solid #c8d0e4; }
.ribbon-tabs { display: flex; gap: 3px; height: 24px; border-bottom: 1px solid #b9c3dc; color: #333; margin-left: 4px; white-space: nowrap; }
.ribbon-tabs button { height: 25px; padding: 0 14px; position: relative; }
.ribbon-tabs .on { height: 24px; padding-top: 1px; background: #eaebf0; border: 1px solid #b9c3dc; border-width: 1px 1px 0 0; border-radius: 0 4px 0 0; }
.ribbon-tabs .on::before { content: ""; position: absolute; left: -10px; top: -1px; width: 19px; height: 24px; border-left: 1px solid #b9c3dc; border-top: 1px solid #b9c3dc; background: #eaebf0; transform: skewX(-38deg); z-index: -1; }
.ribbon-tabs .opts { margin-left: auto; padding: 0; color: #8d8f94; }
.opts svg { width: 14px; height: 14px; }
.ribbon-icons { display: flex; padding: 3px 0 0 4px; }
.ribbon-icons button { width: 28px; height: 24px; }
.ribbon-icons svg { width: 24px; height: 24px; }
.ribbon-icons .sep { border-left: 1px solid #c4c8d2; width: 2px; margin: 0 2px; height: 24px; }

.workspace { flex: 1; display: flex; }
.toolbox { width: 65px; padding: 5px 7px 0 1px; }
.grip { height: 3px; border: 1px solid #c3cde3; border-width: 1px 0; }
.tool-grid { display: grid; grid-template-columns: 28px 28px; padding-top: 2px; }
.tool-grid button { height: 28px; position: relative; }
.tool-grid svg { width: 22px; height: 22px; }
.tool-grid .more::after { content: ""; position: absolute; right: 0; bottom: 0; border: 3px solid; border-color: transparent #444 #444 transparent; }

.views { flex: 1; min-width: 0; display: flex; flex-direction: column; }
.view-grid { flex: 1; display: grid; grid-template-columns: 315fr 1112fr; grid-template-rows: 664fr 81fr; gap: 4px; margin-top: 2px; }
.view { position: relative; min-height: 81px; border: 1px solid #b9c3dc; background: #9da4ac; overflow: hidden; }
.scene { position: absolute; width: 100%; height: 100%; }
.view-title { position: absolute; left: 0; top: 0; height: 22px; padding-left: 8px; background: #c9ced6; color: #5d6066; font-weight: 700; border-radius: 0 0 4px 0; }
.view-title i { align-self: center; display: flex; align-items: center; justify-content: center; width: 16px; height: 21px; margin-left: 8px; border-left: 1px solid #555; }
.view-title i::after { content: ""; border: 5px solid transparent; border-top-color: #555; border-bottom: 0; }
.view-title.current { background: #849ded; color: #2a2d3a; }
.thin * { fill: none; vector-effect: non-scaling-stroke; }
.thin [fill="#90ff38"] { fill: #90ff38; }
.axis { font: 17px "Open Sans", sans-serif; fill: #666; }
.dim { font: 8px "Open Sans", sans-serif; fill: #000; }
.view-tabs { display: flex; height: 28px; margin-left: -1px; }
.view-tabs a { padding: 3px 10px 0 11px; display: flex; align-items: center; height: 28px; line-height: 18px; }
.view-tabs .on { padding: 3px 10px 0 13px; border: 1px solid #b9c3dc; border-top: 0; border-radius: 0 0 4px 12px; }
.view-tabs svg { width: 12px; height: 12px; }

.panel { width: 424px; padding: 2px 2px 1px 9px; display: flex; flex-direction: column; }
.panel-head { display: flex; align-items: center; gap: 5px; padding: 1px 0 0 3px; height: 24px; }
.panel-head .grip { flex: 1; }
.panel-tabs { display: flex; height: 27px; position: relative; }
.panel-tabs button { width: 43px; height: 28px; }
.panel-tabs svg { width: 20px; height: 20px; }
.panel-tabs .on { border: 1px solid #b9c3dc; border-bottom: 0; background: #eaebf0; z-index: 1; }
.panel-tabs .panel-gear { width: 18px; margin-left: auto; color: #b9c3dc; }
.wheel { width: 18px; height: 18px; border-radius: 50%; border: 1px solid #444; background: radial-gradient(circle, #fff 35%, transparent 40%), conic-gradient(red, #f0f, #00f, #0ff, #0f0, #ff0, red); }
.panel-body { flex: 1; border: 1px solid #b9c3dc; display: flex; flex-direction: column; }
.layer-tools { display: flex; height: 46px; align-items: center; padding: 3px 0 0 6px; border-bottom: 1px solid #b9c3dc; }
.layer-tools button { width: 26px; }
.layer-tools svg { width: 19px; height: 19px; }
.layer-list { flex: 1; margin-right: 4px; background: #fff; overflow: hidden; }
table { width: 100%; table-layout: fixed; border-collapse: collapse; }
.w-name { width: 128px; } .w-ic { width: 21px; } .w-txt { width: 81px; }
th { height: 27px; font-weight: 400; text-align: left; padding-left: 6px; border-left: 1px solid #d5dae8; overflow: hidden; }
th:first-child { border: 0; padding-left: 5px; }
td { height: 24px; padding-left: 5px; border-bottom: 1px solid #ededf0; overflow: hidden; white-space: nowrap; }
td:first-child { padding-left: 9px; overflow: visible; }
.ic { padding: 0; }
.ic svg, .ic span { margin: 0 auto; display: block; }
.bulb { width: 12px; height: 17px; } .lock { width: 16px; height: 17px; } .tick { width: 17px; height: 15px; }
.swatch { width: 14px; height: 14px; border: 1px solid #222; background: currentColor; }
.ball { display: block; width: 16px; height: 16px; margin-left: 1px; border-radius: 50%; background: #fafafa; }
.dia { width: 11px; height: 11px; border: 1px solid #000; background: currentColor; transform: rotate(45deg); }
.black { color: #000; } .white { color: #fff; } .green { color: #90ff38; } .pink { color: #ff6bff; }
.sel td { background: #869df0; font-weight: 700; border-color: #fff; }
.swatch.black, .swatch.white, .swatch.green, .dia.black, .dia.white, .dia.green { border-color: #000; }
.sel .swatch, .sel .dia { border-color: #fff; }
.sel .ball { width: 18px; height: 18px; margin-left: 0; }
.hscroll { display: flex; height: 20px; margin-right: 4px; background: #f0f0f0; }
.hscroll button { width: 20px; height: 20px; }
.hscroll svg { width: 8px; height: 12px; }
.track { flex: 1; }
.thumb { width: 86%; height: 19px; background: #cdcdcd; }

.osnap { display: flex; gap: 8px; height: 34px; margin: 0 0 0 4px; padding: 7px 0 0 7px; align-items: center; border-left: 1px solid #c8d0e4; }
.osnap label { display: flex; align-items: center; gap: 4px; }
.osnap input { appearance: none; width: 16px; height: 16px; border: 1px solid #222; background: #fff; position: relative; }
.osnap input:checked::after { content: ""; position: absolute; left: 5px; top: 1px; width: 5px; height: 9px; border: solid #222; border-width: 0 1px 1px 0; transform: rotate(42deg); }
.osnap input:disabled { border-color: #aaa; background: #dfdfdf; }
.osnap .wide { margin-left: 10px; }
.status { display: flex; height: 21px; border-top: 1px solid #b9c3dc; white-space: nowrap; }
.status > * { border-right: 1px solid #b9c3dc; line-height: 21px; text-align: center; }
.status .on { background: #d0d8ee; font-weight: 700; border-left: 1px solid #f4f6fb; }
.c-plane { width: 60px; } .c-num { width: 108px; }
.c-layer { width: 207px; display: flex; align-items: center; gap: 3px; padding-left: 4px; }
.c-layer i { width: 14px; height: 14px; background: #000; }
.s1 { width: 81px; } .s2 { width: 54px; } .s3 { width: 57px; } .s4 { width: 91px; } .s5 { width: 72px; } .s6 { width: 114px; } .s7 { width: 49px; }
.status .c-mem { flex: 1; text-align: left; padding-left: 2px; margin-right: 7px; }

.taskbar { display: flex; height: 50px; color: #fff; background: linear-gradient(90deg, #1d1d1d, #292929 27%, #363434 55%, #383434 88%, #472428 94%, #3c2427); }
.start { width: 60px; }
.start svg { width: 20px; height: 20px; }
.search { width: 430px; display: flex; align-items: center; gap: 14px; padding-left: 15px; background: #f2f2f2; border: 1px solid #bbb; color: #222; }
.search svg { width: 20px; height: 20px; }
.search input { flex: 1; font-size: 18px; outline: 0; }
.search input::placeholder { color: #333; opacity: 1; }
.apps { display: flex; margin-left: -1px; }
.apps button { width: 62px; }
.apps svg { width: 30px; height: 30px; }
.apps .run { box-shadow: inset 0 -3px #76b9ed; }
.apps .active { background: #605f5f; }
.tray { flex: 1; display: flex; align-items: center; justify-content: flex-end; gap: 12px; padding-right: 18px; }
.battery { width: 60px; height: 25px; border: 3px solid #fff; background: linear-gradient(90deg, #16a34a 40%, #000 40%); font-size: 17px; line-height: 18px; text-align: center; position: relative; }
.battery::after { content: ""; position: absolute; right: -6px; top: 4px; width: 3px; height: 11px; background: #fff; }
.t16 { width: 12px; height: 20px; margin: 0 20px 0 0; }
.t28 { width: 28px; height: 24px; }
.t18 { width: 18px; height: 18px; }
.temp { font-size: 17px; margin-right: 8px; }
.clock { display: flex; flex-direction: column; width: 84px; margin-right: 6px; text-align: center; line-height: 23px; }
.notes { position: relative; width: 34px; height: 36px; justify-content: flex-start; }
.notes svg { width: 20px; height: 20px; margin-bottom: 6px; }
.notes b { position: absolute; left: 10px; top: 15px; width: 20px; height: 20px; border: 1px solid #888; border-radius: 50%; background: #303030; font-size: 12px; line-height: 18px; }
```
FILE: script.js
```js
const byId = id => document.getElementById(id);
const icon = (name, cls) => `<svg${cls ? ` class="${cls}"` : ''}><use href="#${name}"/></svg>`;

byId('menubar').innerHTML = 'File,Edit,View,Curve,Surface,SubD,Solid,Mesh,Dimension,Transform,Tools,Analyze,Render,Panels,Paneling Tools,Help'
  .split(',').map(t => `<a href="#">${t}</a>`).join('');

byId('tabs').innerHTML = 'Standard,CPlanes,Set View,Display,Select,Viewport Layout,Visibility,Transform,Curve Tools,Surface Tools,Solid Tools,SubD Tools,Mesh Tools,Render Tools,Drafting,New in V7'
  .split(',').map(t => `<button${t === 'Display' ? ' class="on"' : ''}>${t}</button>`).join('') +
  `<button class="opts" aria-label="Options">${icon('gear')}</button>`;

byId('displayTools').innerHTML = 'wire shaded shaded2 rendered orange ghost xray arctic tech artistic pen | toggle mesh flat glow quad camera clip clipx monitor boxes rgb heat'
  .split(' ').map(n => n === '|' ? '<span class="sep"></span>' : `<button aria-label="${n}">${icon(n)}</button>`).join('');

// A trailing + marks a tool with a fly-out menu.
byId('modelTools').innerHTML = 'select point+ poly+ curve+ circle+ ellipse+ arc+ rect+ polygon+ fillet+ srf+ sweep+ box+ balls+ disc+ mesh2+ puzzle explode trim split group+ ungroup join edit+ text move+ copy rotate bool+ dir+ array+ align+ deform+ check+ solids+ pyramid+'
  .split(' ').map(n => {
    const id = n.replace('+', '');
    return `<button aria-label="${id}"${n.endsWith('+') ? ' class="more"' : ''}>${icon(id)}</button>`;
  }).join('');

byId('layerTools').innerHTML = 'doc docs del up down left filter sheet hammer help'
  .split(' ').map(n => `<button aria-label="${n}">${icon(n)}</button>`).join('');

const layers = [
  ['Default', 'black'], ['GEOMETRIA 1', 'white'], ['GEOMETRIA 2', 'black'], ['CURVAS', 'black'],
  ['SUPERFÍCIE INT', 'green'], ['SUPERFÍCIE EXT', 'pink', true], ['GRID INT', 'white'], ['GRID EXT', 'white'],
  ['PANEL A', 'black'], ['PANEL B', 'black'], ['PANEL C', 'black'], ['CORAL A', 'black'], ['CORAL B', 'black'],
  ['CORAL C', 'black'], ['TEXTO', 'black'], ['NOTAS', 'black'], ['COTAS', 'black']
];
byId('layerRows').innerHTML = layers.map(([name, color, current]) => `<tr${current ? ' class="sel"' : ''}>
  <td>${name}</td><td class="ic">${current ? icon('tick', 'tick') : ''}</td>
  <td class="ic">${current ? '' : icon('bulb', 'bulb')}</td><td class="ic">${current ? '' : icon('lock', 'lock')}</td>
  <td class="ic"><span class="swatch ${color}"></span></td><td><span class="ball"></span></td>
  <td>${current ? 'Continu...' : 'Continuo...'}</td><td class="ic"><span class="dia ${color}"></span></td><td>D</td></tr>`).join('');

byId('osnap').innerHTML = 'End,Near,Point,Mid,Cen,Int,Perp,Tan,Quad,Knot,Vertex,Project,Disable'.split(',').map(t => {
  const off = t === 'Project' || t === 'Disable';
  const on = t === 'End' || t === 'Point';
  return `<label${t === 'Disable' ? ' class="wide"' : ''}><input type="checkbox"${on ? ' checked' : ''}${off ? ' disabled' : ''}>${t}</label>`;
}).join('');

// Cross-sections of the tube: centre x, centre y, radius x, radius y, rotation.
const ring = ([x, y, a, b, r = 0]) => `<ellipse cx="${x}" cy="${y}" rx="${a}" ry="${b}" transform="rotate(${r} ${x} ${y})"/>`;
byId('perspRings').innerHTML = [
  [468, 917, 82, 71], [467, 868, 84, 66], [466, 819, 85, 60], [465, 766, 87, 54], [462, 713, 90, 47], [463, 659, 91, 42, 4],
  [463, 620, 93, 30, 8], [466, 582, 98, 27, 16], [474, 530, 103, 36, 29], [490, 475, 115, 36, 44], [516, 433, 124, 34, 58],
  [533, 410, 126, 32, 64], [556, 393, 127, 30, 71], [592, 380, 136, 30, 81], [641, 371, 135, 28, 90], [694, 374, 132, 28, 95],
  [746, 390, 131, 22, 99], [801, 420, 131, 13, 103], [902, 509, 135, 20, 107], [945, 568, 140, 34, 108], [960, 596, 138, 48, 110],
  [973, 622, 134, 62, 112], [995, 660, 112, 84, 118], [1002, 728, 106, 104, 0], [1000, 775, 103, 90, -8], [1000, 815, 100, 70, -5],
  [992, 870, 100, 68], [984, 924, 96, 66], [975, 971, 92, 59], [968, 1024, 88, 56], [960, 1073, 88, 51], [948, 1115, 86, 52], [950, 1150, 80, 58]
].map(ring).join('');

byId('topRings').innerHTML = [
  [662, 1006, 66, 62], [668, 1006, 64, 66], [665, 1004, 58, 58], [672, 1006, 54, 62], [700, 1006, 40, 66, -12], [715, 1004, 34, 64, -12],
  [738, 1004, 20, 62, -6], [765, 1004, 18, 58, -4], [820, 1004, 9, 60, -2], [850, 1004, 1, 60], [886, 1006, 8, 62, 2], [930, 1006, 16, 56, 2],
  [965, 1008, 14, 64, -4], [990, 1008, 22, 60, -6], [1010, 1008, 36, 62, -10], [1030, 1006, 56, 60], [1038, 1006, 62, 64], [1042, 1006, 66, 64], [1040, 1006, 60, 58]
].map(ring).join('');
```
